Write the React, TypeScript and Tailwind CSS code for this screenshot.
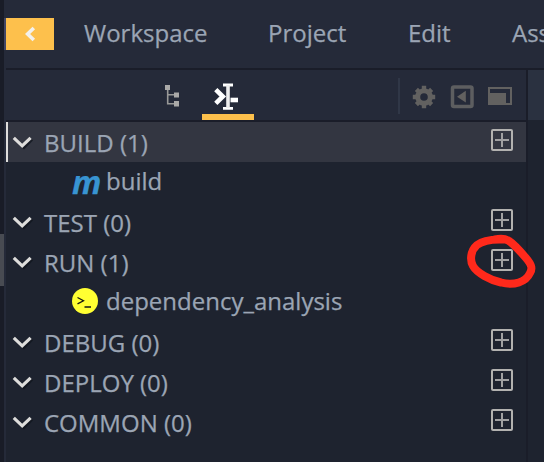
import React from "react";

const categories = [
  { name: "BUILD (1)", selected: true, child: "build" },
  { name: "TEST (0)" },
  { name: "RUN (1)", child: "dependency_analysis" },
  { name: "DEBUG (0)" },
  { name: "DEPLOY (0)" },
  { name: "COMMON (0)" },
];

function Chevron() {
  return (
    <svg className="h-5 w-6 shrink-0" viewBox="0 0 24 20" fill="none">
      <path d="M4 8L12 15.5L20 7.5" stroke="#12151d" strokeWidth="3" opacity="0.75" />
      <path d="M1.8 5.8L10.2 13.8L18.6 5.8" stroke="#dedddb" strokeWidth="3.2" />
    </svg>
  );
}

function PlusBox() {
  return (
    <svg className="h-[22px] w-[22px] shrink-0" viewBox="0 0 22 22" fill="none">
      <rect x="1" y="1" width="20" height="20" rx="1" stroke="#b3b2b0" strokeWidth="2" />
      <path d="M4 11H18M11 4V18" stroke="#a1a1a2" strokeWidth="2" />
    </svg>
  );
}

function TreeIcon() {
  return (
    <svg className="h-[22px] w-[14px]" viewBox="0 0 14 22" fill="none">
      <path d="M2.7 5V18.7H9M2.7 9.8H9" stroke="#999998" strokeWidth="1.6" />
      <path d="M0 0H5V5H0ZM9 7.5H14V12.5H9ZM9 16H14V21.5H9Z" fill="#aaa9a8" />
    </svg>
  );
}

function CommandIcon() {
  return (
    <svg className="h-[27px] w-6" viewBox="0 0 24 27" fill="none">
      <path d="M1.8 6.7L8.8 13.5L1.8 20.3" stroke="#fff" strokeWidth="4.6" />
      <path d="M9 2H19M9 25.3H19" stroke="#fff" strokeWidth="2.8" />
      <path d="M14 2V25" stroke="#eee" strokeWidth="3.6" />
      <path d="M16.5 17H24" stroke="#fff" strokeWidth="4.6" />
    </svg>
  );
}

function Gear() {
  return (
    <svg className="h-6 w-6" viewBox="-12 -12 24 24" fill="none">
      <circle r="6.3" stroke="#626160" strokeWidth="5" />
      <path
        d="M0-11.2V-8M0 11.2V8M-11.2 0H-8M11.2 0H8M-7.6-7.6L-5.4-5.4M7.6 7.6L5.4 5.4M-7.6 7.6L-5.4 5.4M7.6-7.6L5.4-5.4"
        stroke="#626160"
        strokeWidth="4.4"
      />
    </svg>
  );
}

function Menu() {
  return (
    <header className="flex h-[70px] shrink-0 items-center overflow-hidden border-b-2 border-[#1a1d29] bg-[#252a39] text-2xl whitespace-nowrap text-[#9ba5b4]">
      <button className="flex h-8 w-12 shrink-0 items-center justify-center bg-[#fdc04c]">
        <svg className="h-4 w-4" viewBox="0 0 16 16" fill="none">
          <path d="M11.8 2L5.6 8L11.8 14" stroke="#f3f1ed" strokeWidth="3.6" />
        </svg>
      </button>
      <nav className="flex pb-0.5 pl-[30px] leading-8">
        <span className="w-[184px] shrink-0">Workspace</span>
        <span className="w-[140px] shrink-0">Project</span>
        <span className="w-[104px] shrink-0">Edit</span>
        <span className="shrink-0">Ass</span>
      </nav>
    </header>
  );
}

function Toolbar() {
  return (
    <div className="flex h-[52px] shrink-0 border-b-2 border-[#1a1d29] bg-[#252a39]">
      <div className="pt-[15px] pl-[159px]"><TreeIcon /></div>
      <div className="ml-[23px] w-[52px] border-b-[6px] border-[#fdc04c] pt-[13px] pl-3"><CommandIcon /></div>
      <div className="mt-2 ml-[144px] h-9 w-0.5 bg-[#303747]" />
      <div className="flex items-start pt-[15px] pl-3">
        <Gear />
        <svg className="ml-[14px] h-6 w-6" viewBox="0 0 24 24" fill="none">
          <rect x="2.5" y="2" width="19.5" height="19.5" rx="1.5" stroke="#5d5e60" strokeWidth="3.5" />
          <path d="M7 11.7L15.8 5.8V17.5Z" fill="#626160" />
        </svg>
        <svg className="ml-[14px] h-6 w-6" viewBox="0 0 24 24" fill="none">
          <path d="M0 2H24V20H0ZM2 4V8H18V18H22V4Z" fill="#626160" fillRule="evenodd" />
        </svg>
      </div>
    </div>
  );
}

export default function App() {
  return (
    <div className="relative flex h-[462px] w-[544px] overflow-hidden bg-[#1e232f] font-['Open_Sans','Noto_Sans',sans-serif] [-webkit-text-stroke:0.25px]">
      <aside className="w-1 shrink-0 bg-[#191c27] pt-[234px]"><div className="h-[52px] bg-[#484b52]" /></aside>
      <div className="w-0.5 shrink-0 bg-[#252a39] pt-[18px]"><div className="h-8 bg-[#424664]" /></div>
      <div className="flex min-w-0 flex-1 flex-col">
        <Menu />
        <div className="flex min-h-0 flex-1">
          <main className="flex w-[520px] shrink-0 flex-col">
            <Toolbar />
            {categories.map((c) => (
              <section key={c.name} className="text-2xl text-[#9ba5b4]">
                <div className={c.selected ? "flex h-10 items-start border-l-2 border-[#dedddb] bg-[#333641] pt-1.5 pr-[13px]" : "flex h-10 items-start border-l-2 border-transparent pt-1.5 pr-[13px]"}>
                  <div className="ml-1 pt-1"><Chevron /></div>
                  <span className="ml-2 flex-1 leading-[30px]">{c.name}</span>
                  <div className="pt-px"><PlusBox /></div>
                </div>
                {c.child && (
                  <div className="flex h-10 items-center pb-0.5 pl-[66px]">
                    {c.child === "build" ? (
                      <span className="w-[34px] pt-0.5 text-[32.5px] leading-8 font-bold text-[#3894d2] italic">m</span>
                    ) : (
                      <svg className="mr-2 h-[26px] w-[26px]" viewBox="0 0 26 26" fill="none">
                        <circle cx="13" cy="13" r="13" fill="#ffff32" />
                        <path d="M5.5 9.5L11.5 12.7L5.5 15.9M12.5 19H19" stroke="#151713" strokeWidth="1.3" />
                      </svg>
                    )}
                    <span className="leading-8">{c.child}</span>
                  </div>
                )}
              </section>
            ))}
          </main>
          <div className="w-0.5 bg-[#1a1d29]" />
          <div className="flex-1"><div className="h-[50px] bg-[#2a3140]" /></div>
        </div>
      </div>
      <svg className="pointer-events-none absolute top-[230px] left-[464px] h-[64px] w-[76px]" viewBox="0 0 76 64" fill="none">
        <path d="M40 9.5C29 9 19 10 13 15C6 21 6 31 9 36C13 43 26 50 37 52.5C50 56 62 52 66 43C69 38 67 34 62 28C56 21 50 14 45 11Q40 7.5 31 9.5" stroke="#ff291b" strokeWidth="8" strokeLinecap="round" strokeLinejoin="round" />
      </svg>
    </div>
  );
}
